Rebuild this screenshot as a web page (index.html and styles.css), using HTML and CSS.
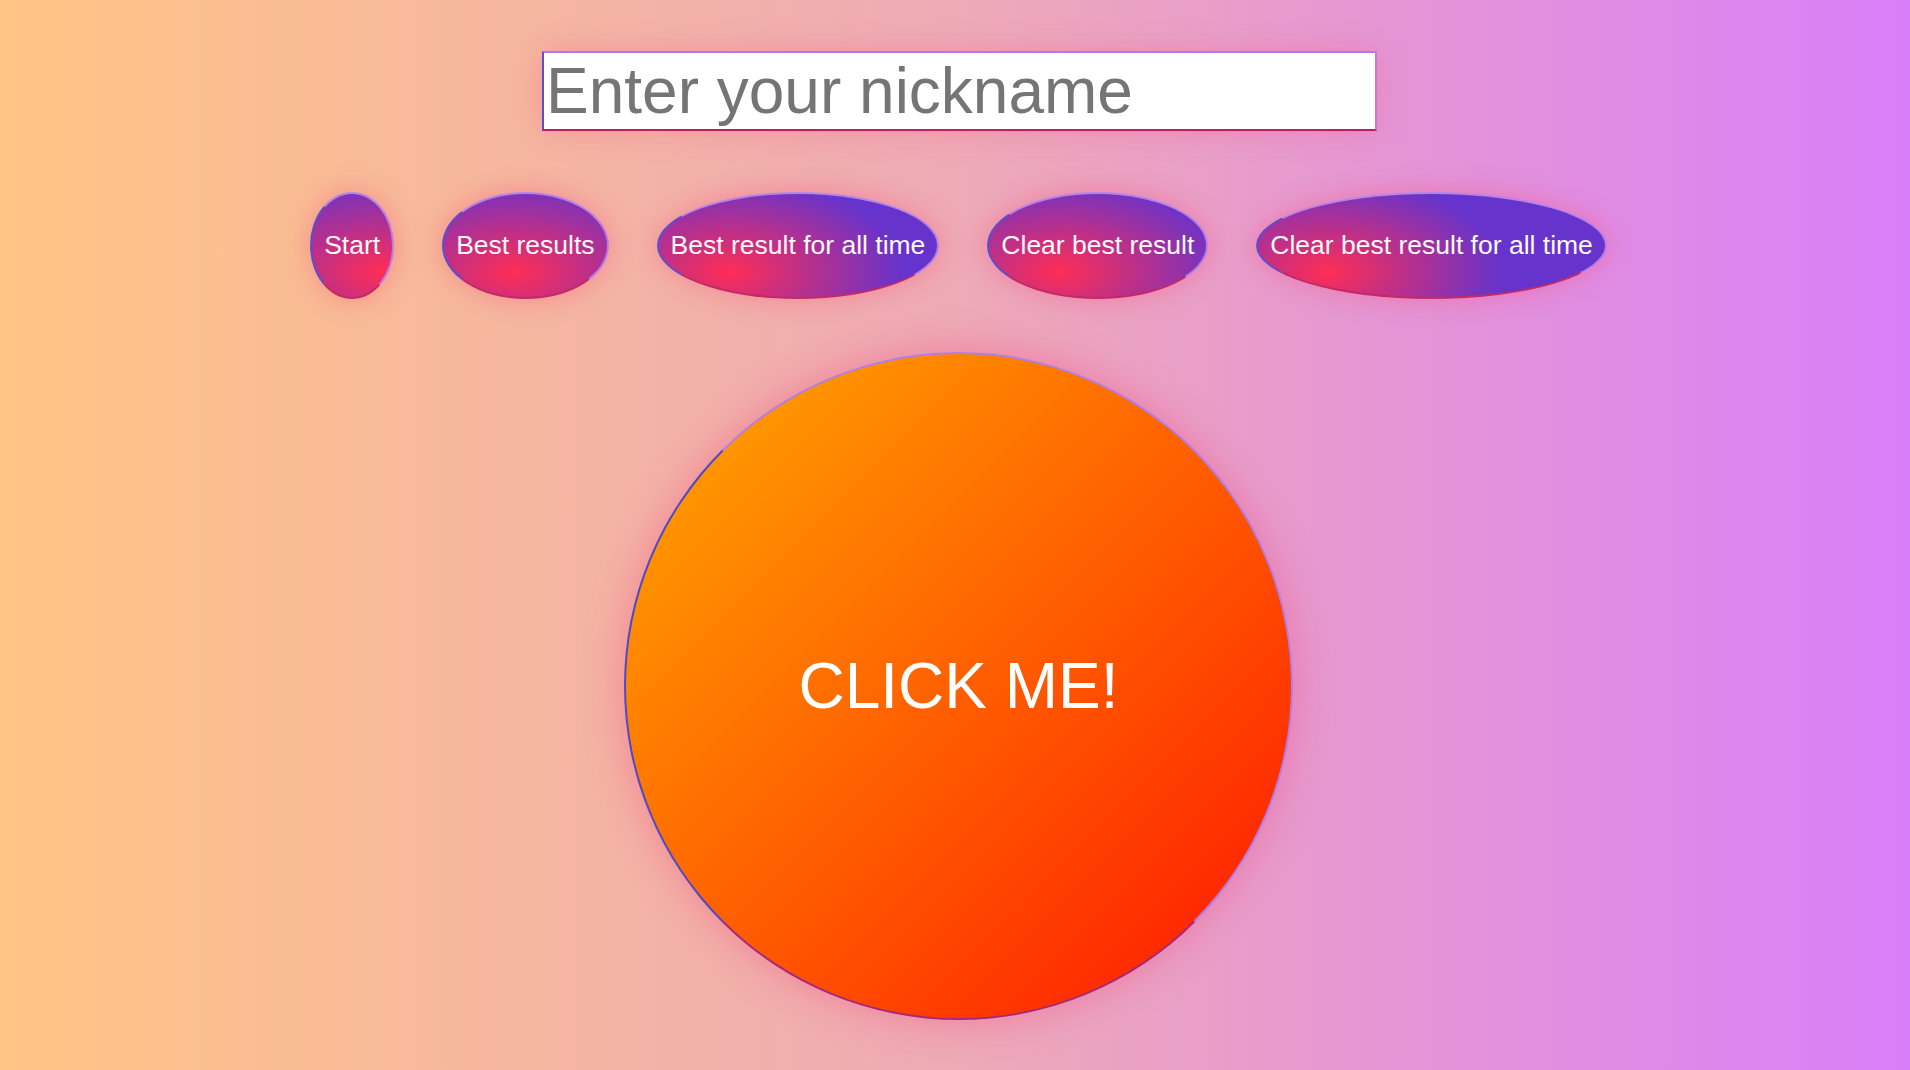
FILE: index.html
```html
<!DOCTYPE html>
<html lang="en">
<head>
<meta charset="utf-8">
<title>Click game</title>
<link rel="stylesheet" href="styles.css">
</head>
<body>
<main class="page">
  <input class="nick" type="text" placeholder="Enter your nickname">
  <div class="actions">
    <button class="btn">Start</button>
    <button class="btn">Best results</button>
    <button class="btn">Best result for all time</button>
    <button class="btn">Clear best result</button>
    <button class="btn">Clear best result for all time</button>
  </div>
  <div class="clicker">CLICK ME!</div>
</main>
</body>
</html>
```
FILE: styles.css
```css
html {
  height: 100%;
  background: linear-gradient(to right, #fec584 0%, #eeaab6 50%, #d97ef9 100%);
}
body {
  margin: 0;
  min-height: 100vh;
  font-family: "Liberation Sans", Arial, sans-serif;
}
.page {
  display: flex;
  flex-direction: column;
  align-items: center;
  padding: 51px 0 0 7px;
}
.nick {
  box-sizing: border-box;
  width: 835px;
  height: 80px;
  margin: 0 0 0 2px;
  padding: 1px 2px;
  font-family: "Liberation Sans", Arial, sans-serif;
  font-size: 64px;
  color: #333;
  background: #fff;
  border: 2px solid;
  border-color: #b577e6 #c27ad9 #c21d62 #5a4fcf;
  box-shadow: 0 0 28px rgba(250, 90, 140, 0.35);
  outline: none;
}
.nick::placeholder {
  color: #757575;
}
.actions {
  display: flex;
  gap: 48px;
  margin-top: 61px;
}
.btn {
  box-sizing: border-box;
  height: 107px;
  padding: 0 12px;
  border-radius: 50%;
  border: 2px solid;
  border-color: #b384ea #b77ee0 #c22a64 #5a4fcf;
  background: radial-gradient(ellipse 175px 95px at 70px 78px, #ff2d55 0%, #6633cc 100%);
  color: #fff8fb;
  font-family: "Liberation Sans", Arial, sans-serif;
  font-size: 26.5px;
  white-space: nowrap;
  box-shadow: 0 0 26px rgba(250, 70, 120, 0.4);
  cursor: pointer;
}
.clicker {
  box-sizing: border-box;
  width: 669px;
  height: 668px;
  margin-top: 53px;
  display: flex;
  align-items: center;
  justify-content: center;
  border-radius: 50%;
  border: 2px solid;
  border-color: #b07ee8 #b07ee8 #a8287a #5048c8;
  background: linear-gradient(135deg, #ffab00 0%, #ff1400 100%);
  color: #fff;
  font-size: 64px;
  box-shadow: 0 0 40px rgba(245, 60, 120, 0.4);
  cursor: pointer;
  user-select: none;
}
```
